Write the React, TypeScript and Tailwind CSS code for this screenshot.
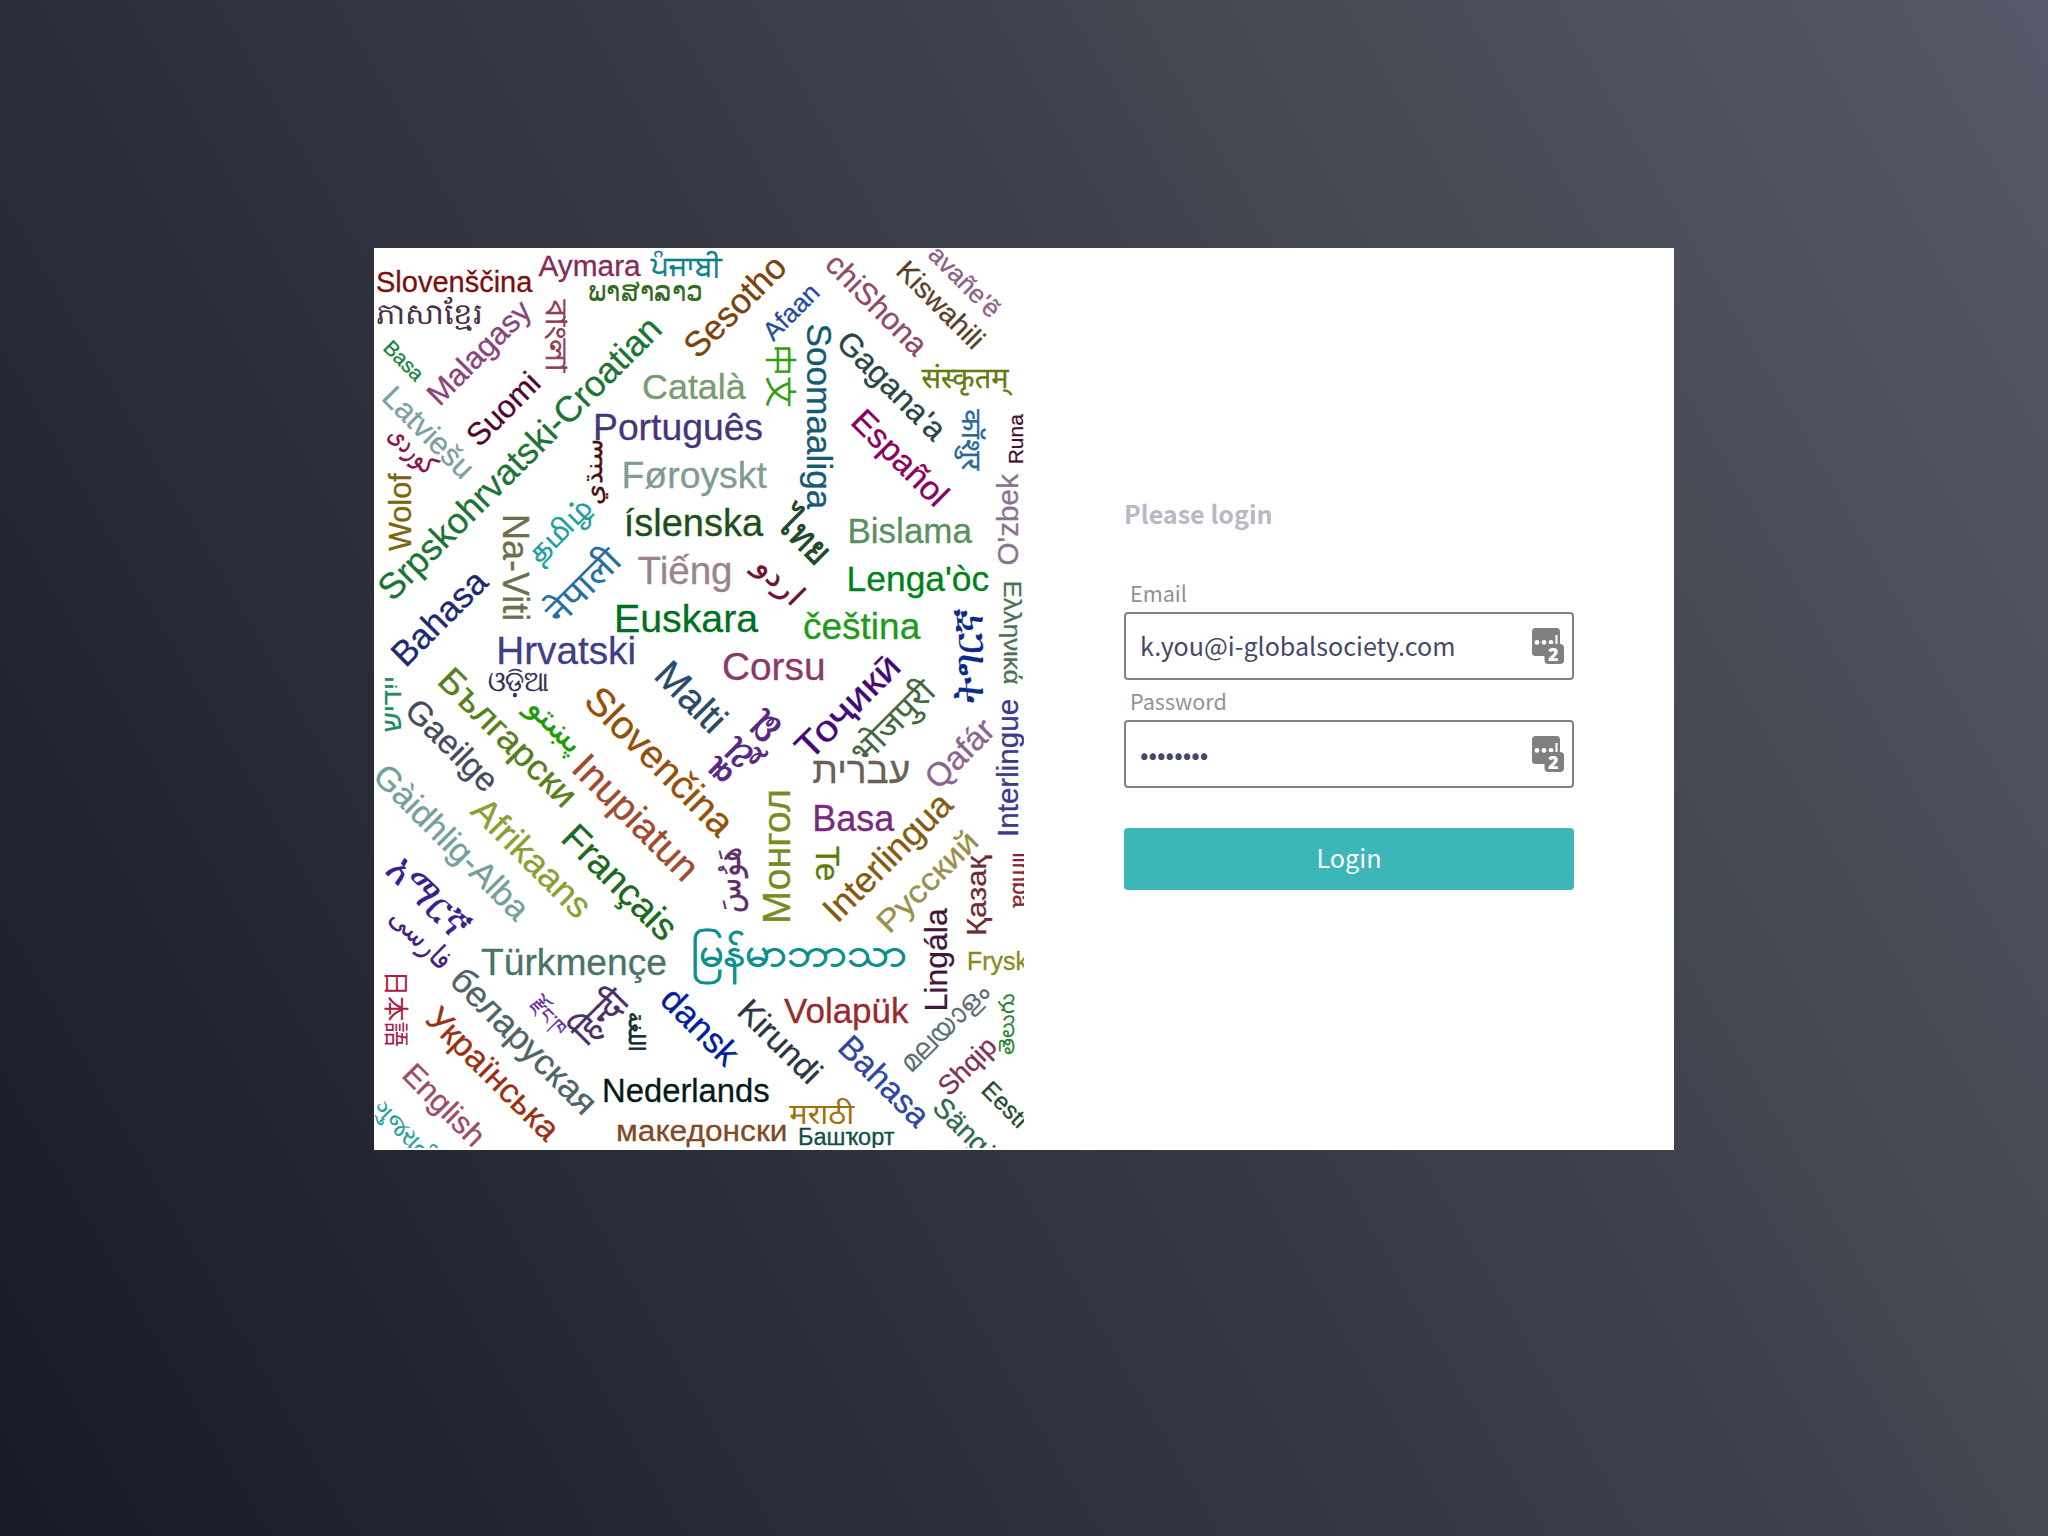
import type { ReactNode } from "react";

type Word = {
  t: string; // word
  x: number; // baseline origin, px
  y: number;
  s: number; // font size
  c: string; // colour
  a?: number; // rotation in degrees
  w?: number; // run length, when it must be fitted
  k?: number; // outline thickness that sets the weight
};

const words: Word[] = [
  { t: "Slovenščina", x: 376, y: 292, s: 29, c: "#7a1010" },
  { t: "Aymara", x: 538.5, y: 276.4, s: 29.8, c: "#862b5a" },
  { t: "ਪੰਜਾਬੀ", x: 650.5, y: 276, s: 29, w: 71, c: "#0b7f8c", k: 0.6 },
  { t: "ພາສາລາວ", x: 588, y: 300.7, s: 29, w: 115, c: "#356b1f", k: 0 },
  { t: "ភាសាខ្មែរ", x: 376, y: 324.3, s: 29.5, w: 106, c: "#4a2f49", k: 0 },
  { t: "Malagasy", x: 439.4, y: 406.9, s: 31, a: -45, c: "#8a437b" },
  { t: "বাংলা", x: 545.7, y: 300, s: 29, a: 90, w: 72, c: "#8f3a57", k: 0.7 },
  { t: "Basa", x: 382, y: 349, s: 20.8, a: 45, c: "#1a8040" },
  { t: "Latviešu", x: 380.2, y: 399, s: 31, a: 45, c: "#7d9fa3" },
  { t: "Suomi", x: 479.3, y: 448.2, s: 31.5, a: -45, c: "#520030" },
  { t: "Srpskohrvatski-Croatian", x: 392.4, y: 602.6, s: 36, a: -45, c: "#1c7434" },
  { t: "كوردی", x: 386.7, y: 436.4, s: 28, a: 45, w: 55, c: "#8a0f45" },
  { t: "Wolof", x: 411, y: 551, s: 30.6, a: -90, c: "#7a660f" },
  { t: "Na-Viti", x: 502.7, y: 514, s: 36, a: 90, c: "#6b6f4a" },
  { t: "سنڌي", x: 601.5, y: 505, s: 25, a: -90, w: 66, c: "#4a1008" },
  { t: "தமிழ்", x: 539, y: 564.3, s: 28.5, a: -45, w: 78, c: "#1c9fa0", k: 0.7 },
  { t: "नेपाली", x: 560, y: 626.5, s: 36, a: -45, w: 90, c: "#256fa3", k: 0 },
  { t: "Sesotho", x: 698, y: 360, s: 35, a: -45, c: "#7a430a" },
  { t: "Afaan", x: 773.3, y: 342.1, s: 26, a: -45, c: "#1f4da0" },
  { t: "中文", x: 768.6, y: 344.2, s: 31.7, a: 90, c: "#2f9f10", k: 0 },
  { t: "Soomaaliga", x: 806.7, y: 323.5, s: 35.2, a: 90, c: "#155a70" },
  { t: "chiShona", x: 823.5, y: 266, s: 31, a: 45, c: "#8f4a6b" },
  { t: "Kiswahili", x: 894.5, y: 272.6, s: 28.5, a: 45, c: "#5a3f28" },
  { t: "avañe'ẽ", x: 926.7, y: 256, s: 25.8, a: 45, c: "#8a6088" },
  { t: "Gagana'a", x: 834.8, y: 344.2, s: 32.3, a: 45, c: "#2a4548" },
  { t: "संस्कृतम्", x: 921.5, y: 388.3, s: 29, w: 87, c: "#667a10" },
  { t: "कॉशुर", x: 962, y: 409.3, s: 27, a: 90, w: 61, c: "#2a6a9a" },
  { t: "Runa", x: 1022.7, y: 464.3, s: 21, a: -90, c: "#4a1030" },
  { t: "O'zbek", x: 1018.3, y: 565.5, s: 29.7, a: -90, c: "#8a748f" },
  { t: "Català", x: 642, y: 399, s: 35.9, c: "#7a9a72" },
  { t: "Português", x: 593, y: 439.6, s: 37.3, c: "#45367a" },
  { t: "Føroyskt", x: 621.5, y: 487.7, s: 37.4, c: "#829a94" },
  { t: "íslenska", x: 623.7, y: 535.9, s: 38, c: "#1d5018" },
  { t: "Bislama", x: 847.5, y: 542.6, s: 35, c: "#5a9060" },
  { t: "Español", x: 849.3, y: 423, s: 33.5, a: 45, c: "#8a0060" },
  { t: "ไทย", x: 773.7, y: 524.9, s: 37.5, a: 45, w: 60, c: "#1a4a28", k: 0.9 },
  { t: "Tiếng", x: 637.5, y: 584, s: 38.6, c: "#998589" },
  { t: "Bahasa", x: 405.4, y: 668.5, s: 35.2, a: -45, c: "#1e2a70" },
  { t: "Euskara", x: 614, y: 631.7, s: 39.3, c: "#007020" },
  { t: "Hrvatski", x: 496.3, y: 664, s: 38.7, c: "#3f3f85" },
  { t: "ଓଡ଼ିଆ", x: 487.5, y: 691, s: 29, w: 61, c: "#2f2a50", k: 0.4 },
  { t: "اردو", x: 753, y: 568, s: 30, a: 45, w: 55, c: "#701035" },
  { t: "Lenga'òc", x: 846.6, y: 590.7, s: 35.4, c: "#00821a" },
  { t: "čeština", x: 803, y: 639, s: 37, c: "#209a18" },
  { t: "Corsu", x: 722, y: 679.7, s: 38.8, c: "#8a3a6a" },
  { t: "ትግርኛ", x: 983.3, y: 702.7, s: 44, a: -90, w: 94, c: "#0a2a8a", k: 0.3 },
  { t: "Ελληνικά", x: 1004.3, y: 580.5, s: 24, a: 90, w: 104, c: "#4a7055" },
  { t: "Malti", x: 652.3, y: 677, s: 39.3, a: 45, c: "#2a4a68" },
  { t: "ಕನ್ನಡ", x: 720, y: 786, s: 37.5, a: -45, w: 90, c: "#552a80", k: 0.9 },
  { t: "Тоҷикӣ", x: 809.7, y: 762, s: 36.5, a: -45, w: 132, c: "#45087a" },
  { t: "भोजपुरी", x: 864.5, y: 766.5, s: 33, a: -45, w: 103, c: "#46663f", k: 0.1 },
  { t: "עברית", x: 812.3, y: 783, s: 37, w: 98, c: "#6a6055" },
  { t: "Slovenčina", x: 582.2, y: 702.7, s: 39.3, a: 45, c: "#945008" },
  { t: "Български", x: 435.8, y: 682.3, s: 36, a: 45, w: 180, c: "#567f1a" },
  { t: "Gaeilge", x: 403, y: 712.4, s: 33.6, a: 45, c: "#454a60" },
  { t: "پښتو", x: 525, y: 709, s: 31, a: 45, w: 67, c: "#1f9a08" },
  { t: "ייִדיש", x: 400.7, y: 732, s: 26, a: -90, w: 56, c: "#1f8a70" },
  { t: "Gàidhlig-Alba", x: 371.2, y: 778, s: 34, a: 45, c: "#72a09b" },
  { t: "Afrikaans", x: 469.2, y: 812.8, s: 36.5, a: 45, c: "#8aa030" },
  { t: "Inupiatun", x: 569.7, y: 770, s: 39.1, a: 45, c: "#a04a30" },
  { t: "Français", x: 559.3, y: 839.8, s: 38.1, a: 45, c: "#1a6a20" },
  { t: "አማርኛ", x: 384.4, y: 871.5, s: 43, a: 45, w: 98, c: "#38208a", k: 0.3 },
  { t: "فارسی", x: 387.9, y: 918.9, s: 29.5, a: 45, w: 75, c: "#452080", k: 0.1 },
  { t: "Türkmençe", x: 481, y: 974.6, s: 37.2, c: "#4a7468" },
  { t: "беларуская", x: 448, y: 982, s: 35.5, a: 45, w: 191, c: "#4f6468" },
  { t: "Українська", x: 424, y: 1020.8, s: 34, a: 45, w: 172.5, c: "#9a3010" },
  { t: "日本語", x: 387, y: 970.5, s: 25.5, a: 90, w: 76.5, c: "#a82045", k: 0 },
  { t: "English", x: 400.4, y: 1076.2, s: 31.2, a: 45, c: "#9f4a6a" },
  { t: "ગુજરાતી", x: 371.8, y: 1110.4, s: 24, a: 45, w: 78, c: "#1a9f98" },
  { t: "རྫོང་ཁ", x: 529, y: 1006.3, s: 19, a: 45, w: 42, c: "#6a30a0" },
  { t: "हिन्दी", x: 586.6, y: 1047.4, s: 36, a: -45, w: 62, c: "#4a3068" },
  { t: "اللغة", x: 628.8, y: 1012.3, s: 22, a: 90, w: 39.5, c: "#0f3035", k: 0.7 },
  { t: "မြန်မာဘာသာ", x: 691, y: 966.2, s: 39.5, w: 215.5, c: "#0a8f8c", k: 1 },
  { t: "هَوُسَ", x: 740, y: 912.5, s: 33, a: -90, w: 65, c: "#5f2f68" },
  { t: "Монгол", x: 790, y: 924, s: 38, a: -90, w: 135, c: "#788a22" },
  { t: "Te", x: 816, y: 846, s: 33.5, a: 90, c: "#607a08" },
  { t: "Basa", x: 812.3, y: 830.9, s: 36, c: "#782a80" },
  { t: "Interlingua", x: 837.3, y: 924.3, s: 35.6, a: -45, c: "#855a0f" },
  { t: "Русский", x: 889.2, y: 934.8, s: 31.5, a: -45, w: 129, c: "#98904a" },
  { t: "Қазақ", x: 986, y: 936, s: 28, a: -90, w: 80, c: "#702a35" },
  { t: "Interlingue", x: 1018.3, y: 837, s: 29.6, a: -90, c: "#3a3a90" },
  { t: "Qafár", x: 938.2, y: 791, s: 33.2, a: -45, c: "#8a6590" },
  { t: "limba", x: 1013.3, y: 852.5, s: 23, a: 90, c: "#8a2030" },
  { t: "Lingála", x: 946.7, y: 1011.5, s: 32, a: -90, c: "#451540" },
  { t: "Frysk", x: 967, y: 970.3, s: 24.9, c: "#8a8820" },
  { t: "dansk", x: 658.5, y: 1001.5, s: 35.3, a: 45, c: "#001f9a" },
  { t: "Kirundi", x: 735.4, y: 1013, s: 33.2, a: 45, c: "#2a3548" },
  { t: "Volapük", x: 784, y: 1022.7, s: 35, c: "#982a30" },
  { t: "മലയാളം", x: 910.7, y: 1074, s: 28.5, a: -45, w: 113, c: "#5a6f75", k: 0.1 },
  { t: "తెలుగు", x: 1014.3, y: 1055, s: 22, a: -90, w: 62, c: "#2f8030", k: 0 },
  { t: "Bahasa", x: 836, y: 1049, s: 33.4, a: 45, c: "#3048a0" },
  { t: "Shqip", x: 949, y: 1097.3, s: 27.3, a: -45, c: "#80305a" },
  { t: "Eesti", x: 980, y: 1091.3, s: 24.3, a: 45, c: "#1f4a30" },
  { t: "Sängö", x: 931, y: 1109, s: 28.2, a: 45, c: "#2f6a50" },
  { t: "Nederlands", x: 602, y: 1101.7, s: 32.8, c: "#061a18" },
  { t: "македонски", x: 616, y: 1140.7, s: 29, w: 171.5, c: "#804a25" },
  { t: "मराठी", x: 789.3, y: 1124.3, s: 29.5, w: 65, c: "#a0700f", k: 0 },
  { t: "Башҡорт", x: 798, y: 1144.8, s: 23.5, w: 96.5, c: "#0f5045" },
];

function WordCloud() {
  return (
    <svg
      viewBox="374 248 650 900"
      className="block h-[900px] w-[650px] shrink-0 overflow-hidden font-['Liberation_Sans','Noto_Sans','Noto_Sans_CJK_JP',sans-serif]"
    >
      {words.map((w, i) => (
        <text
          key={i}
          fontSize={w.s}
          fill={w.c}
          stroke={w.c}
          strokeWidth={w.k ?? 0.3}
          transform={`translate(${w.x} ${w.y}) rotate(${w.a ?? 0})`}
          textLength={w.w}
          lengthAdjust={w.w ? "spacingAndGlyphs" : undefined}
        >
          {w.t}
        </text>
      ))}
    </svg>
  );
}

function PasswordManagerIcon() {
  return (
    <svg viewBox="0 0 32 36" className="h-9 w-8 shrink-0">
      <rect width="28" height="28" rx="3.5" fill="#808080" />
      <circle cx="5" cy="14.4" r="2.4" fill="#fff" />
      <circle cx="12" cy="14.4" r="2.4" fill="#fff" />
      <circle cx="19" cy="14.4" r="2.4" fill="#fff" />
      <rect x="23.5" y="7" width="2" height="10" fill="#fff" />
      <rect x="12.5" y="16" width="19.5" height="20" rx="4" fill="#808080" />
      <text x="21.2" y="32.6" textAnchor="middle" fontSize="18" fontWeight="800" fill="#fff" fontFamily="Open Sans, sans-serif">
        2
      </text>
    </svg>
  );
}

function Field({ label, children }: { label: string; children: ReactNode }) {
  return (
    <label className="flex flex-col">
      <span className="flex h-10 items-center pt-0.5 pl-1.5 text-[21.6px] leading-none text-[#929292]">{label}</span>
      <span className="flex h-[68px] items-center justify-between rounded border-2 border-[#808086] pr-2 pl-3.5 text-[25.1px] text-[#46476a]">
        {children}
        <PasswordManagerIcon />
      </span>
    </label>
  );
}

export default function App() {
  return (
    <div className="flex h-[1536px] w-[2048px] items-start justify-center bg-[linear-gradient(60deg,#181a25_0%,#3d3f4b_60%,#444850_71%,#4b4f59_82%,#565869_100%)] pt-[248px] font-['Noto_Sans_CJK_JP',sans-serif]">
      <main className="flex h-[902px] w-[1300px] bg-white">
        <WordCloud />
        <section className="flex flex-1 flex-col px-[100px] pt-[250px]">
          <h1 className="h-[74px] text-[25.1px] leading-[30px] font-bold text-[#b9b8c6]">Please login</h1>
          <form className="flex flex-col">
            <Field label="Email">
              <span>k.you@i-globalsociety.com</span>
            </Field>
            <Field label="Password">
              <span>••••••••</span>
            </Field>
            <button type="button" className="mt-10 h-[62px] rounded bg-[#3cb6b6] pb-0.5 text-[25.2px] text-white">
              Login
            </button>
          </form>
        </section>
      </main>
    </div>
  );
}
